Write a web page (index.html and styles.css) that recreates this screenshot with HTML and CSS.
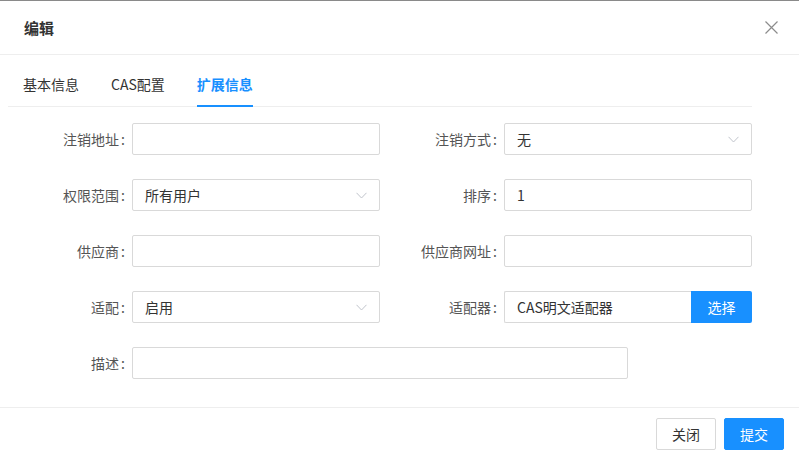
FILE: index.html
```html
<!DOCTYPE html>
<html lang="zh">
<head>
<meta charset="utf-8">
<title>编辑</title>
<link rel="stylesheet" href="styles.css">
</head>
<body>
<div class="dialog">
  <div class="dialog-header">
    <span class="dialog-title">编辑</span>
    <svg class="close-icon" width="13" height="13" viewBox="0 0 13 13"><path d="M0.5 0.5L12.5 12.5M12.5 0.5L0.5 12.5" stroke="#8c8c8c" stroke-width="1.2" fill="none"/></svg>
  </div>
  <div class="dialog-body">
    <div class="tabs">
      <div class="tab">基本信息</div>
      <div class="tab">CAS配置</div>
      <div class="tab active">扩展信息</div>
    </div>
    <div class="form">
      <div class="field">
        <label class="label">注销地址<span class="colon">:</span></label>
        <div class="input"></div>
      </div>
      <div class="field">
        <label class="label">注销方式<span class="colon">:</span></label>
        <div class="input select">无<svg class="chev" width="11" height="7" viewBox="0 0 11 7"><path d="M0.5 0.8L5.5 6L10.5 0.8" stroke="#c0c4cc" stroke-width="1" fill="none"/></svg></div>
      </div>
      <div class="field">
        <label class="label">权限范围<span class="colon">:</span></label>
        <div class="input select">所有用户<svg class="chev" width="11" height="7" viewBox="0 0 11 7"><path d="M0.5 0.8L5.5 6L10.5 0.8" stroke="#c0c4cc" stroke-width="1" fill="none"/></svg></div>
      </div>
      <div class="field">
        <label class="label">排序<span class="colon">:</span></label>
        <div class="input">1</div>
      </div>
      <div class="field">
        <label class="label">供应商<span class="colon">:</span></label>
        <div class="input"></div>
      </div>
      <div class="field">
        <label class="label">供应商网址<span class="colon">:</span></label>
        <div class="input"></div>
      </div>
      <div class="field">
        <label class="label">适配<span class="colon">:</span></label>
        <div class="input select">启用<svg class="chev" width="11" height="7" viewBox="0 0 11 7"><path d="M0.5 0.8L5.5 6L10.5 0.8" stroke="#c0c4cc" stroke-width="1" fill="none"/></svg></div>
      </div>
      <div class="field">
        <label class="label">适配器<span class="colon">:</span></label>
        <div class="input-group">
          <div class="input grouped">CAS明文适配器</div>
          <button class="btn-append">选择</button>
        </div>
      </div>
      <div class="field wide">
        <label class="label">描述<span class="colon">:</span></label>
        <div class="input"></div>
      </div>
    </div>
  </div>
  <div class="dialog-footer">
    <button class="btn">关闭</button>
    <button class="btn primary">提交</button>
  </div>
</div>
</body>
</html>
```
FILE: styles.css
```css
* { box-sizing: border-box; }
html, body { margin: 0; padding: 0; }
body {
  width: 799px;
  height: 460px;
  background: #fff;
  font-family: "Noto Sans CJK SC", "Noto Sans", sans-serif;
  font-size: 14px;
  color: #333;
  border-top: 1px solid #8a8a8a;
  overflow: hidden;
}
.dialog { width: 799px; }
.dialog-header {
  height: 54px;
  display: flex;
  align-items: center;
  justify-content: space-between;
  padding: 0 21px 0 24px;
  border-bottom: 1px solid #eeeeee;
}
.dialog-title {
  font-size: 15px;
  font-weight: 700;
  color: #333;
  line-height: 20px;
}
.close-icon { display: block; }
.dialog-body {
  padding: 8px 0 28px 8px;
}
.tabs {
  width: 744px;
  display: flex;
  gap: 32px;
  padding-left: 15px;
  border-bottom: 1px solid #eeeeee;
}
.tab {
  line-height: 42px;
  border-bottom: 2px solid transparent;
  margin-bottom: -1px;
  color: #333;
  font-size: 14px;
}
.tab.active {
  color: #1890ff;
  border-bottom-color: #1890ff;
  font-weight: 600;
}
.form {
  margin-top: 16px;
  display: grid;
  grid-template-columns: 372px 372px;
  row-gap: 24px;
}
.field {
  display: flex;
  align-items: center;
  height: 32px;
}
.field.wide { grid-column: 1 / span 2; }
.label {
  width: 124px;
  flex: none;
  text-align: right;
  padding-right: 7px;
  color: #555;
  font-size: 14px;
}
.colon { margin-left: 2px; }
.input {
  width: 248px;
  height: 32px;
  border: 1px solid #d9d9d9;
  border-radius: 2px;
  padding: 0 12px;
  display: flex;
  align-items: center;
  color: #333;
  font-size: 14px;
  line-height: 30px;
}
.field.wide .input { width: 496px; }
.select { justify-content: space-between; }
.chev { display: block; }
.input-group {
  display: flex;
  width: 248px;
}
.input.grouped {
  width: 187px;
  border-radius: 2px 0 0 2px;
  border-right: none;
}
.btn-append {
  width: 61px;
  height: 32px;
  border: none;
  background: #1890ff;
  color: #fff;
  font-family: inherit;
  font-size: 14px;
  border-radius: 0 2px 2px 0;
  padding: 0;
}
.dialog-footer {
  border-top: 1px solid #eeeeee;
  display: flex;
  justify-content: flex-end;
  gap: 8px;
  padding: 10px 15px 0 0;
}
.btn {
  width: 60px;
  height: 32px;
  border: 1px solid #d9d9d9;
  background: #fff;
  border-radius: 2px;
  color: #333;
  font-family: inherit;
  font-size: 14px;
  padding: 0;
}
.btn.primary {
  background: #1890ff;
  border-color: #1890ff;
  color: #fff;
}
```
